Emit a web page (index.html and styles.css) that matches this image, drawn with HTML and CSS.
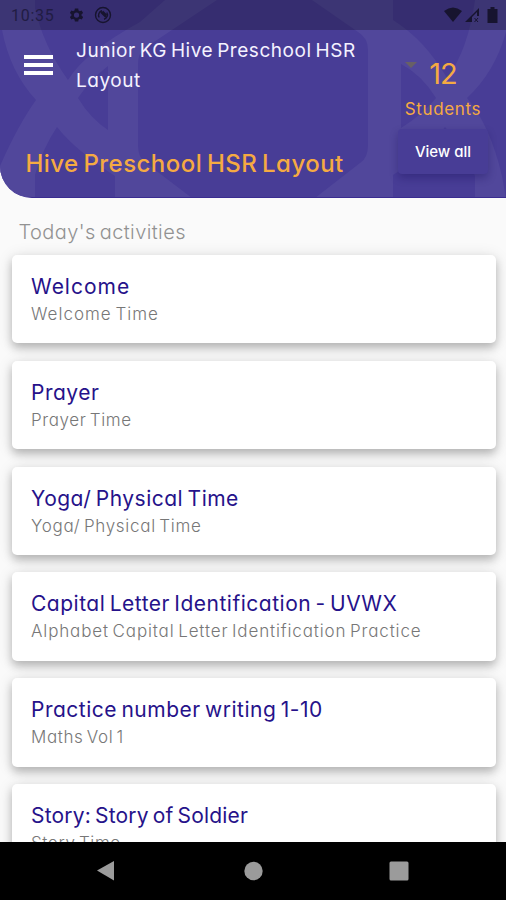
FILE: index.html
```html
<!DOCTYPE html>
<html lang="en">
<head>
  <meta charset="UTF-8">
  <title>Today's activities</title>
  <link rel="stylesheet" href="styles.css">
</head>
<body>

<div class="screen">
  <header class="header">
    <svg class="pattern" viewBox="0 0 506 198" aria-hidden="true">
      <path d="M0 0H35V8Q43 45 68 80Q85 52 140 22L165 0H217L145 48Q138 53 138 64V145Q138 158 146 163L192 198H115V176Q75 150 57 127Q43 148 35 175V198H0V166Q18 125 36 100Q10 72 2 30H0Z M108 66Q90 80 78 98Q90 118 108 130Z" fill-rule="evenodd"/>
      <path d="M312 0H393V20Q425 40 447 78Q468 50 475 0H506V32Q495 72 467 98Q490 125 502 176L506 198H475V176Q465 148 445 127Q425 155 393 175V198H315L360 163Q368 158 368 145V50Q368 38 358 32Z M401 64V128Q422 115 436 98Q422 75 401 64Z" fill-rule="evenodd"/>
    </svg>

    <div class="status-bar">
      <span class="time">10:35</span>
      <svg class="gear" viewBox="0 0 24 24"><path fill-rule="evenodd" d="M19.4 13a7.500 7.500 0 0 0 0-2l2.100-1.600-2-3.500-2.500 1a7 7 0 0 0-1.700-1L15 3.200h-4.500L10 5.900a7 7 0 0 0-1.700 1l-2.500-1-2 3.500L5.900 11a7.500 7.500 0 0 0 0 2l-2.100 1.600 2 3.500 2.500-1a7 7 0 0 0 1.700 1l.5 2.700H15l.4-2.700a7 7 0 0 0 1.700-1l2.500 1 2-3.500zM12.700 8.500a3.500 3.500 0 1 1 0 7 3.500 3.500 0 0 1 0-7z"/></svg>
      <svg class="sync" viewBox="0 0 18 18"><circle cx="9" cy="9" r="7.500"/><path d="M5.200 11.500A4.500 4.500 0 0 1 8 4.800M12.800 6.500A4.500 4.500 0 0 1 10 13.200"/><path d="M7 6l5 5M8.500 5.500l4 4" class="thick"/></svg>
      <span class="spacer"></span>
      <svg class="wifi" viewBox="0 0 18 16"><path d="M0 4Q9-3 18 4L9 15Z"/></svg>
      <svg class="signal" viewBox="0 0 16 16"><path fill-rule="evenodd" d="M0 15L14 1V9H12V5L7 10V15Z"/><path d="M9.500 11l3.500 4M13 11l-3.500 4" class="cross"/></svg>
      <svg class="battery" viewBox="0 0 10 16"><path d="M3 0h4v2h3v14H0V2h3z"/></svg>
    </div>

    <div class="header-content">
      <div class="header-main">
        <div class="top-row">
          <div class="menu"><span></span><span></span><span></span></div>
          <div class="class-name">Junior KG Hive Preschool HSR<br>Layout</div>
        </div>
        <h1>Hive Preschool HSR Layout</h1>
      </div>
      <div class="students">
        <span class="arrow"></span>
        <div class="count">12</div>
        <div class="count-label">Students</div>
        <button type="button">View all</button>
      </div>
    </div>
  </header>

  <main class="content">
    <h2>Today's activities</h2>
    <div class="card welcome">
      <h3>Welcome</h3>
      <p>Welcome Time</p>
    </div>
    <div class="card prayer">
      <h3>Prayer</h3>
      <p>Prayer Time</p>
    </div>
    <div class="card">
      <h3>Yoga/ Physical Time</h3>
      <p>Yoga/ Physical Time</p>
    </div>
    <div class="card letters">
      <h3>Capital Letter Identification - UVWX</h3>
      <p>Alphabet Capital Letter Identification Practice</p>
    </div>
    <div class="card numbers">
      <h3>Practice number writing 1-10</h3>
      <p>Maths Vol 1</p>
    </div>
    <div class="card story">
      <h3>Story: Story of Soldier</h3>
      <p>Story Time</p>
    </div>
  </main>

  <nav class="nav-bar">
    <svg viewBox="0 0 20 22"><path d="M1 10.500L18 1V20.500Z"/></svg>
    <svg viewBox="0 0 20 22"><circle cx="10.500" cy="11" r="9.200"/></svg>
    <svg viewBox="0 0 20 22"><rect x=".5" y="1.500" width="19" height="19" rx="1.500"/></svg>
  </nav>
</div>

</body>
</html>
```
FILE: styles.css
```css
* {
  box-sizing: border-box;
}

body {
  margin: 0;
  background: #fafafa;
  font-family: Inter, "Open Sans", sans-serif;
  font-feature-settings: "cv11" 1;
}

.screen {
  display: flex;
  flex-direction: column;
  height: 900px;
  overflow: hidden;
}

h1, h2, h3, p {
  margin: 0;
  font-weight: 400;
  white-space: nowrap;
  word-spacing: -2px;
}

/* header */
.header {
  position: relative;
  flex: none;
  height: 198px;
  background: #483d96;
  border-bottom-left-radius: 32px;
  border-bottom: 1px solid #3a2c91;
  overflow: hidden;
}

.pattern {
  position: absolute;
  top: 0;
  left: 0;
  width: 506px;
  height: 198px;
  fill: #51479b;
}

.status-bar {
  position: relative;
  display: flex;
  align-items: center;
  height: 30px;
  padding: 0 8px 0 11px;
  background: rgba(0, 0, 0, 0.25);
  fill: #17142f;
  color: #211c43;
}

.time {
  width: 56px;
  font-family: Roboto, sans-serif;
  font-size: 16px;
  letter-spacing: 0.7px;
}

.gear {
  width: 18px;
  height: 18px;
}

.sync {
  width: 18px;
  height: 18px;
  margin-left: 9px;
  fill: none;
  stroke: #17142f;
  stroke-width: 1.4;
}

.thick {
  stroke-width: 2;
}

.spacer {
  flex: 1;
}

.wifi {
  width: 18px;
  height: 16px;
}

.signal {
  width: 16px;
  height: 16px;
  margin: 0 6px 0 3px;
}

.cross {
  stroke: #17142f;
}

.battery {
  width: 11px;
  height: 16px;
}

.header-content {
  position: relative;
  display: flex;
  justify-content: space-between;
}

.header-main {
  padding-left: 24px;
}

.top-row {
  display: flex;
  gap: 23px;
  padding-top: 6px;
}

.menu {
  display: flex;
  flex-direction: column;
  gap: 4px;
  padding-top: 19px;
}

.menu span {
  width: 29px;
  height: 4px;
  background: #fff;
}

.class-name {
  color: #f4f2ff;
  font-size: 19px;
  letter-spacing: 0.55px;
  line-height: 30px;
  white-space: nowrap;
  word-spacing: -2px;
}

.header h1 {
  margin: 51px 0 0 1.5px;
  color: #f5aa42;
  font-size: 24px;
  font-weight: 500;
  letter-spacing: 0.45px;
  line-height: 34px;
}

.students {
  position: relative;
  width: 90px;
  margin-right: 18px;
  padding-top: 26px;
  color: #f5aa42;
  text-align: center;
}

.arrow {
  position: absolute;
  top: 32px;
  left: 7px;
  border: 6px solid transparent;
  border-top-color: #686066;
  border-bottom: 0;
}

.count {
  font-size: 29px;
  letter-spacing: -1px;
  line-height: 36px;
}

.count-label {
  font-size: 17px;
  letter-spacing: 0.65px;
  line-height: 34px;
}

.students button {
  width: 90px;
  height: 45px;
  margin-top: 3px;
  padding: 0;
  border: 0;
  border-radius: 4px;
  background: #483d96;
  box-shadow: 0 4px 8px rgba(20, 10, 80, 0.32);
  color: #fff;
  font: inherit;
  font-size: 15px;
  font-weight: 500;
}

/* activities */
.content {
  flex: 1;
  min-height: 0;
  padding: 17px 10px 0 11.5px;
  overflow: hidden;
}

.content h2 {
  margin: 0 0 5px 7px;
  color: #929292;
  font-size: 20px;
  font-weight: 300;
  letter-spacing: 0.4px;
  line-height: 35px;
}

.card {
  height: 88.4px;
  margin-bottom: 17.4px;
  padding: 18px 19.500px;
  background: #fff;
  border-radius: 5px;
  box-shadow: 0 5px 8px rgba(0, 0, 0, 0.22), 0 2px 16px rgba(0, 0, 0, 0.12);
}

.card h3 {
  color: #26128a;
  font-size: 21px;
  letter-spacing: 0.5px;
  line-height: 28px;
}

.card p {
  color: #777;
  font-size: 17px;
  font-weight: 300;
  letter-spacing: 0.7px;
  line-height: 26px;
}

.welcome h3,
.welcome p {
  letter-spacing: 1px;
}

.letters p {
  letter-spacing: 0.86px;
}

.numbers p,
.prayer p,
.story p {
  letter-spacing: 0.6px;
}

.story h3 {
  letter-spacing: 0.18px;
}

/* android navigation */
.nav-bar {
  display: flex;
  flex: none;
  justify-content: space-between;
  align-items: center;
  height: 58px;
  padding: 0 97px 0 96px;
  background: #000;
}

.nav-bar svg {
  width: 20px;
  height: 22px;
  fill: #9b9b9b;
}
```
